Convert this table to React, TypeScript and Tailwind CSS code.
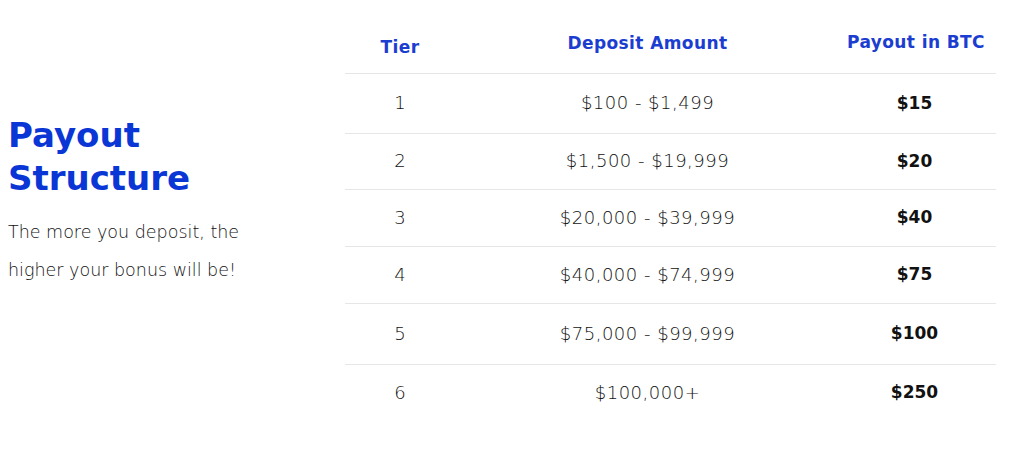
const rows = [
  { tier: '1', amount: '$100 - $1,499', payout: '$15', h: 'h-[60px]' },
  { tier: '2', amount: '$1,500 - $19,999', payout: '$20', h: 'h-[56px]' },
  { tier: '3', amount: '$20,000 - $39,999', payout: '$40', h: 'h-[57px]' },
  { tier: '4', amount: '$40,000 - $74,999', payout: '$75', h: 'h-[57px]' },
  { tier: '5', amount: '$75,000 - $99,999', payout: '$100', h: 'h-[61px]' },
  { tier: '6', amount: '$100,000+', payout: '$250', h: 'h-[56px]' },
];

export default function App() {
  return (
    <div className="w-[1024px] h-[449px] bg-white flex font-['DejaVu_Sans',sans-serif] overflow-hidden">
      {/* Left intro */}
      <div className="w-[345px] pl-2 pt-[114px]">
        <h2 className="text-[34px] leading-[43px] font-bold text-[#0a36d6]">
          Payout
          <br />
          Structure
        </h2>
        <p className="mt-[13px] text-[17.5px] leading-[38px] font-light text-[#111]">
          The more you deposit, the
          <br />
          higher your bonus will be!
        </p>
      </div>

      {/* Table */}
      <div className="w-[651px] pt-[18px]">
        <div className="flex items-center h-[56px] border-b border-[#e6e6e6] text-[17px] tracking-[0.4px] font-bold text-[#1b3dd0]">
          <div className="w-[110px] text-center pt-[5px]">Tier</div>
          <div className="w-[385px] text-center -mt-[4px]">Deposit Amount</div>
          <div className="flex-1 text-center -mt-[5px] pr-[4px]">Payout in BTC</div>
        </div>
        {rows.map((r, i) => (
          <div
            key={r.tier}
            className={`flex items-center ${r.h} ${i < rows.length - 1 ? 'border-b border-[#e6e6e6]' : ''} text-[18px]`}
          >
            <div className="w-[110px] text-center font-light text-[#111] -mt-[2px]">{r.tier}</div>
            <div className="w-[385px] text-center font-light tracking-[0.5px] text-[#111] -mt-[2px]">{r.amount}</div>
            <div className="flex-1 text-center font-bold text-[17px] text-[#111] pr-[7px]">{r.payout}</div>
          </div>
        ))}
      </div>
    </div>
  );
}
